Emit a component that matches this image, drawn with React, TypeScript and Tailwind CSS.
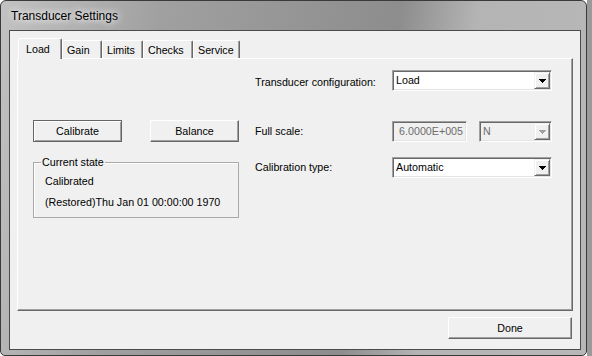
import React from 'react';

const tabs = [
  { label: 'Load', w: 'w-[44px]' },
  { label: 'Gain', w: 'w-[40px]' },
  { label: 'Limits', w: 'w-[41px]' },
  { label: 'Checks', w: 'w-[50px]' },
  { label: 'Service', w: 'w-[47px]' },
];

function Arrow({ color }: { color: string }) {
  return (
    <svg width="7" height="4" viewBox="0 0 7 4" shapeRendering="crispEdges">
      <path d="M0 0h7v1h-1v1h-1v1h-1v1h-1v-1h-1v-1h-1v-1h-1z" fill={color} />
    </svg>
  );
}

function Combo({ value, disabled = false, width }: { value: string; disabled?: boolean; width: string }) {
  return (
    <div
      className={`flex h-[21px] ${width} border border-t-[#a0a0a0] border-l-[#a0a0a0] border-r-white border-b-white p-[1px] shadow-[inset_1px_1px_0_#696969,inset_-1px_-1px_0_#e3e3e3] ${
        disabled ? 'bg-[#f0f0f0] text-[#6d6d6d]' : 'bg-white text-black'
      }`}
    >
      <span className="flex-1 pl-[2px] leading-[17px]">{value}</span>
      <div className="flex w-[16px] h-[17px] items-center justify-center bg-[#f0f0f0] border border-t-[#f0f0f0] border-l-[#f0f0f0] border-r-[#696969] border-b-[#696969] shadow-[inset_1px_1px_0_#fff,inset_-1px_-1px_0_#a0a0a0]">
        <Arrow color={disabled ? '#a0a0a0' : '#000'} />
      </div>
    </div>
  );
}

function Btn({ children, w, isDefault = false }: { children: React.ReactNode; w: string; isDefault?: boolean }) {
  return (
    <button
      className={`${w} h-[22px] bg-[#f0f0f0] text-black leading-[20px] text-center ${
        isDefault
          ? 'border border-[#646464] shadow-[inset_1px_1px_0_#fff,inset_-1px_-1px_0_#a0a0a0]'
          : 'border border-t-white border-l-white border-r-[#696969] border-b-[#696969] shadow-[inset_-1px_-1px_0_#a0a0a0]'
      }`}
    >
      {children}
    </button>
  );
}

export default function App() {
  return (
    <div className="flex w-[592px] h-[356px] bg-white text-[10.7px] [font-family:'Liberation_Sans',Arial,sans-serif]">
      {/* Window */}
      <div className="flex flex-col w-[587px] h-[356px] rounded-t-[6px] rounded-b-[5px] border border-[#3a3a3a] bg-[linear-gradient(100deg,#c2c2c2_0%,#a0a0a0_25%,#8c8d8c_62%,#b4b4b4_74%,#b8b8b8_100%)]">
        {/* Title bar */}
        <div className="flex h-[29px] items-center pl-[10px]">
          <span className="text-[12px] text-black [text-shadow:0_0_6px_#fff,0_0_10px_#eee]">
            Transducer Settings
          </span>
        </div>

        {/* Client area */}
        <div className="flex flex-col ml-[8px] mr-[5px] mb-[5px] h-[320px] bg-[#f0f0f0] border border-[#4b4b4b] px-[7px] pt-[7px]">
          {/* Tab strip */}
          <div className="flex h-[20px] items-end">
            {tabs.map((t, i) =>
              i === 0 ? (
                <div
                  key={t.label}
                  className={`relative z-10 ${t.w} h-[21px] -mb-px ml-[1px] pl-[7px] pt-[2px] bg-[#f0f0f0] rounded-t-[2px] border-t border-l border-white border-r border-r-[#696969] shadow-[inset_-1px_0_0_#a0a0a0]`}
                >
                  {t.label}
                </div>
              ) : (
                <div
                  key={t.label}
                  className={`${t.w} h-[18px] pl-[4px] pt-[1px] bg-[#f0f0f0] rounded-t-[2px] border-t border-l border-white border-r border-r-[#696969] shadow-[inset_-1px_0_0_#a0a0a0]`}
                >
                  {t.label}
                </div>
              )
            )}
          </div>

          {/* Tab panel */}
          <div className="flex h-[253px] border border-t-white border-l-white border-r-[#696969] border-b-[#696969] shadow-[inset_-1px_-1px_0_#a0a0a0]">
            {/* Left column */}
            <div className="flex flex-col w-[237px] pl-[15px] pt-[61px]">
              <div className="flex gap-[28px]">
                <Btn w="w-[89px]" isDefault>
                  Calibrate
                </Btn>
                <Btn w="w-[89px]">Balance</Btn>
              </div>
              <div className="relative mt-[20px] w-[206px] h-[56px] border border-[#a9a9a9] shadow-[inset_1px_1px_0_#fff] pl-[11px] pt-[12px]">
                <span className="absolute -top-[7px] left-[7px] px-[1px] bg-[#f0f0f0] leading-[13px]">
                  Current state
                </span>
                <div className="leading-[13px]">Calibrated</div>
                <div className="leading-[13px] mt-[8px]">(Restored)Thu Jan 01 00:00:00 1970</div>
              </div>
            </div>

            {/* Right column */}
            <div className="flex flex-col pt-[11px]">
              <div className="flex items-center h-[21px]">
                <span className="w-[137px] pt-[3px]">Transducer configuration:</span>
                <Combo value="Load" width="w-[160px]" />
              </div>
              <div className="flex items-center h-[21px] mt-[30px]">
                <span className="w-[137px]">Full scale:</span>
                <div className="flex h-[21px] w-[75px] items-center justify-end pr-[3px] bg-[#f0f0f0] text-[#6d6d6d] border border-t-[#a0a0a0] border-l-[#a0a0a0] border-r-white border-b-white shadow-[inset_1px_1px_0_#696969,inset_-1px_-1px_0_#e3e3e3]">
                  6.0000E+005
                </div>
                <div className="ml-[12px]">
                  <Combo value="N" width="w-[73px]" disabled />
                </div>
              </div>
              <div className="flex items-center h-[21px] mt-[15px]">
                <span className="w-[137px]">Calibration type:</span>
                <Combo value="Automatic" width="w-[160px]" />
              </div>
            </div>
          </div>

          {/* Footer */}
          <div className="flex justify-end mt-[6px] pr-[1px]">
            <Btn w="w-[124px]">Done</Btn>
          </div>
        </div>
      </div>
      <div className="w-[5px] h-[356px] bg-[#9a9a9a]" />
    </div>
  );
}
